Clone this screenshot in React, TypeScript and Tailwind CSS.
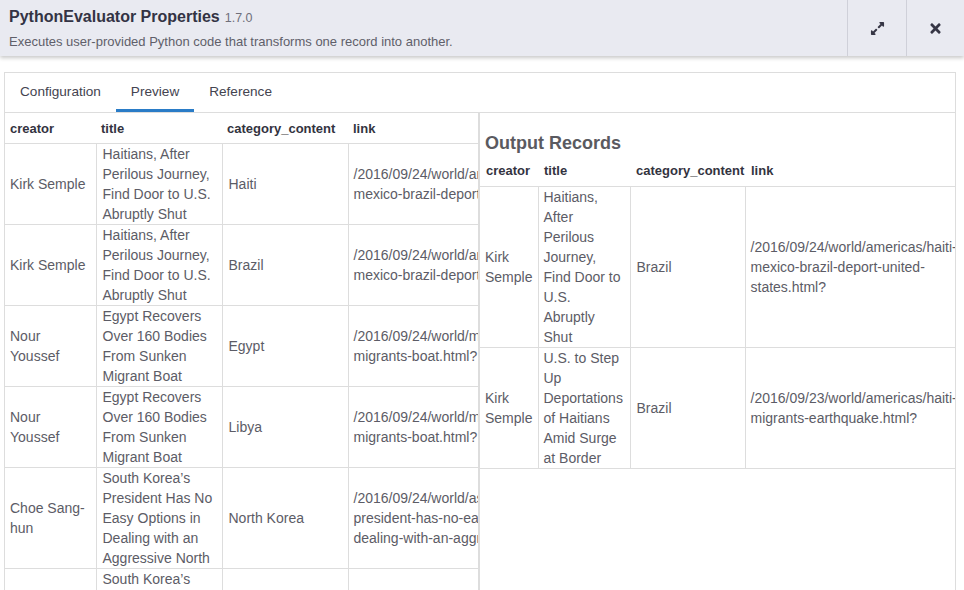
import React from "react";
import { FaExpandAlt, FaTimes } from "react-icons/fa";

type Row = {
  creator: string;
  title: string;
  category: string;
  link: string[];
};

// link lines are split the way the original page wraps them
const haitiWide = [
  "/2016/09/24/world/americas/haiti-",
  "mexico-brazil-deport-united-states.html?",
];
const egyptWide = ["/2016/09/24/world/middleeast/egypt-", "migrants-boat.html?"];
const koreaWide = [
  "/2016/09/24/world/asia/south-korea-",
  "president-has-no-easy-options-in-",
  "dealing-with-an-aggressive-north.html?",
];

const inputRows: Row[] = [
  {
    creator: "Kirk Semple",
    title: "Haitians, After Perilous Journey, Find Door to U.S. Abruptly Shut",
    category: "Haiti",
    link: haitiWide,
  },
  {
    creator: "Kirk Semple",
    title: "Haitians, After Perilous Journey, Find Door to U.S. Abruptly Shut",
    category: "Brazil",
    link: haitiWide,
  },
  {
    creator: "Nour Youssef",
    title: "Egypt Recovers Over 160 Bodies From Sunken Migrant Boat",
    category: "Egypt",
    link: egyptWide,
  },
  {
    creator: "Nour Youssef",
    title: "Egypt Recovers Over 160 Bodies From Sunken Migrant Boat",
    category: "Libya",
    link: egyptWide,
  },
  {
    creator: "Choe Sang-hun",
    title:
      "South Korea’s President Has No Easy Options in Dealing with an Aggressive North",
    category: "North Korea",
    link: koreaWide,
  },
  {
    creator: "Choe Sang-hun",
    title:
      "South Korea’s President Has No Easy Options in Dealing with an Aggressive North",
    category: "South Korea",
    link: koreaWide,
  },
];

const outputRows: Row[] = [
  {
    creator: "Kirk Semple",
    title: "Haitians, After Perilous Journey, Find Door to U.S. Abruptly Shut",
    category: "Brazil",
    link: [
      "/2016/09/24/world/americas/haiti-",
      "mexico-brazil-deport-united-",
      "states.html?",
    ],
  },
  {
    creator: "Kirk Semple",
    title: "U.S. to Step Up Deportations of Haitians Amid Surge at Border",
    category: "Brazil",
    link: ["/2016/09/23/world/americas/haiti-", "migrants-earthquake.html?"],
  },
];

const headers = ["creator", "title", "category_content", "link"];

const LinkCell = ({ lines }: { lines: string[] }) => (
  <div className="whitespace-nowrap">
    {lines.map((l, i) => (
      <div key={i}>{l}</div>
    ))}
  </div>
);

const InputTable = () => (
  <table className="table-fixed border-collapse w-[640px] text-[14px] leading-[20px]">
    <colgroup>
      <col className="w-[91px]" />
      <col className="w-[126px]" />
      <col className="w-[126px]" />
      <col className="w-[297px]" />
    </colgroup>
    <thead>
      <tr className="border-b border-[#dddddd]">
        {headers.map((h) => (
          <th
            key={h}
            className="text-left font-bold text-[13px] text-[#333340] pl-[5px] pr-[4px] pt-[6px] pb-[4px] whitespace-nowrap"
          >
            {h}
          </th>
        ))}
      </tr>
    </thead>
    <tbody className="text-[#5c5c66]">
      {inputRows.map((r, i) => (
        <tr key={i} className="border-b border-[#dddddd]">
          <td className="align-middle pl-[5px] pr-[6px] border-r border-[#dddddd]">{r.creator}</td>
          <td className="align-middle pl-[6px] pr-[2px] border-r border-[#dddddd]">{r.title}</td>
          <td className="align-middle pl-[6px] pr-[4px] border-r border-[#dddddd]">{r.category}</td>
          <td className="align-middle pl-[5px] pr-[4px]">
            <LinkCell lines={r.link} />
          </td>
        </tr>
      ))}
    </tbody>
  </table>
);

const OutputTable = () => (
  <table className="table-fixed border-collapse w-[540px] text-[14px] leading-[20px]">
    <colgroup>
      <col className="w-[58px]" />
      <col className="w-[92px]" />
      <col className="w-[115px]" />
      <col className="w-[275px]" />
    </colgroup>
    <thead>
      <tr className="border-b border-[#dddddd]">
        {headers.map((h) => (
          <th
            key={h}
            className="text-left font-bold text-[13px] text-[#333340] pl-[6px] pr-0 pt-0 pb-[5px] whitespace-nowrap"
          >
            {h}
          </th>
        ))}
      </tr>
    </thead>
    <tbody className="text-[#5c5c66]">
      {outputRows.map((r, i) => (
        <tr key={i} className="border-b border-[#dddddd]">
          <td className="align-middle pl-[5px] pr-[3px] border-r border-[#dddddd]">{r.creator}</td>
          <td className="align-middle pl-[5px] pr-[7px] border-r border-[#dddddd]">{r.title}</td>
          <td className="align-middle pl-[6px] pr-[4px] border-r border-[#dddddd]">{r.category}</td>
          <td className="align-middle pl-[5px] pr-[4px]">
            <LinkCell lines={r.link} />
          </td>
        </tr>
      ))}
    </tbody>
  </table>
);

export default function App() {
  return (
    <div
      className="w-[964px] h-[590px] overflow-hidden bg-white flex flex-col"
      style={{ fontFamily: '"Liberation Sans", Arial, sans-serif' }}
    >
      {/* Header */}
      <div className="relative z-10 h-[56px] shrink-0 bg-[#e9eaf1] flex shadow-[0_2px_4px_rgba(0,0,0,0.22)]">
        <div className="flex-1 pl-[9px] pt-[7px]">
          <div className="flex items-baseline gap-[5px]">
            <span className="text-[16px] font-bold text-[#333344] leading-[20px]">
              PythonEvaluator Properties
            </span>
            <span className="text-[12.5px] text-[#6f6f7a]">1.7.0</span>
          </div>
          <div className="text-[13px] text-[#5f5f6a] mt-[6px] leading-[16px]">
            Executes user-provided Python code that transforms one record into another.
          </div>
        </div>
        <button className="w-[59px] border-l border-[#cfd0d9] flex items-center justify-center text-[#363645]">
          <FaExpandAlt size={15} />
        </button>
        <button className="w-[58px] border-l border-[#cfd0d9] flex items-center justify-center text-[#363645]">
          <FaTimes size={15} />
        </button>
      </div>

      {/* Body */}
      <div className="flex-1 pt-[16px] pl-[4px] pr-[8px] min-h-0">
        <div className="h-full border border-[#dddddd] border-b-0 flex flex-col">
          <div className="h-[40px] shrink-0 flex border-b border-[#dddddd] text-[13.6px] text-[#444450]">
            <div className="px-[15px] flex items-center">Configuration</div>
            <div className="px-[15px] flex items-center border-b-[3px] border-[#2a7cc7] pt-[3px]">
              Preview
            </div>
            <div className="px-[15px] flex items-center">Reference</div>
          </div>
          <div className="flex-1 flex min-h-0">
            <div className="w-[473px] shrink-0 overflow-hidden">
              <InputTable />
            </div>
            <div className="flex-1 overflow-hidden border-l-2 border-[#dddddd]">
              <div className="pl-[5px] pt-[20px] pb-[8px] text-[18px] leading-[20px] font-semibold text-[#5a5a60]">
                Output Records
              </div>
              <OutputTable />
            </div>
          </div>
        </div>
      </div>
    </div>
  );
}
